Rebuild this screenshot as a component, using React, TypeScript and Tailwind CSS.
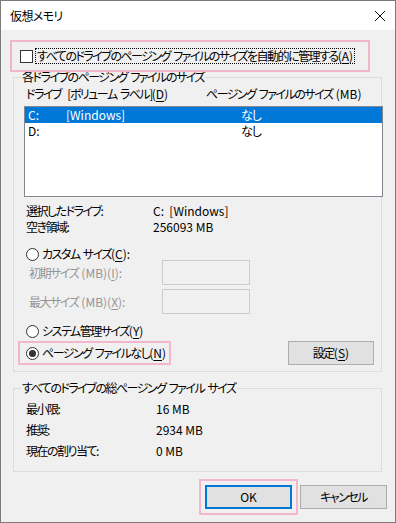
import React from "react";

const U = ({ children }: { children: React.ReactNode }) => (
  <span className="underline underline-offset-2">{children}</span>
);

// latin-only strings keep normal spacing
const L = ({ children }: { children: React.ReactNode }) => (
  <span className="tracking-normal [word-spacing:0px]">{children}</span>
);

function Radio({ checked }: { checked?: boolean }) {
  return (
    <span className="flex h-[13px] w-[13px] shrink-0 items-center justify-center rounded-full border border-[#333] bg-white">
      {checked && <span className="h-[7px] w-[7px] rounded-full bg-[#333]" />}
    </span>
  );
}

function Group({
  label,
  className,
  children,
}: {
  label: string;
  className: string;
  children: React.ReactNode;
}) {
  return (
    <div className={`relative border border-[#dcdcdc] ${className}`}>
      <span className="absolute -top-[9px] left-[7px] bg-[#f0f0f0] px-[1px] leading-[16px]">
        {label}
      </span>
      {children}
    </div>
  );
}

export default function App() {
  return (
    <div className="flex h-[523px] w-[396px] flex-col whitespace-nowrap border border-[#7a7a7a] bg-[#f0f0f0] font-['Noto_Sans_CJK_JP',sans-serif] text-[12px] leading-[16px] tracking-[-1.5px] text-black [font-feature-settings:'palt'] [word-spacing:2px]">
      {/* title bar */}
      <div className="flex h-[29px] items-center justify-between bg-white pl-[9px] pr-[8px]">
        <span className="tracking-[-0.6px]">仮想メモリ</span>
        <svg width="12" height="12" viewBox="0 0 12 12" className="mr-[1px]">
          <path d="M1 1 L11 11 M11 1 L1 11" stroke="#111" strokeWidth="1" />
        </svg>
      </div>

      {/* auto manage */}
      <div className="relative z-10 ml-[9px] mt-[10px] flex h-[32px] w-[360px] items-center border-2 border-[#f4b6cc] pl-[8px]">
        <span className="h-[13px] w-[13px] border border-[#333] bg-white" />
        <span className="ml-[2px] border border-dotted border-black px-[1px] leading-[14px]">
          すべてのドライブのページング ファイルのサイズを自動的に管理する
          <L>
            (<U>A</U>)
          </L>
        </span>
      </div>

      {/* per-drive group */}
      <Group
        label="各ドライブのページング ファイルのサイズ"
        className="ml-[12px] mt-[5px] h-[295px] w-[369px] pl-[10px] pr-[7px]"
      >
        <div className="mt-[8px] flex pl-[2px]">
          <span className="w-[180px]">
            ドライブ&nbsp;&nbsp;[ボリューム ラベル]
            <L>
              (<U>D</U>)
            </L>
          </span>
          <span>
            ページング ファイルのサイズ <L>(MB)</L>
          </span>
        </div>

        <div className="mt-[4px] mr-[-9px] h-[91px] border border-[#828790] bg-white tracking-normal">
          <div className="flex h-[16px] items-center bg-[#0078d7] pl-[3px] text-white">
            <span className="w-[38px]">C:</span>
            <span className="w-[175px]">[Windows]</span>
            <span className="tracking-[-1px]">なし</span>
          </div>
          <div className="flex h-[16px] items-center pl-[3px]">
            <span className="w-[213px]">D:</span>
            <span className="tracking-[-1px]">なし</span>
          </div>
        </div>

        <div className="mt-[6px] pl-[2px]">
          <div className="flex">
            <span className="w-[127px]">選択したドライブ:</span>
            <L>C:&nbsp;&nbsp;[Windows]</L>
          </div>
          <div className="flex">
            <span className="w-[127px]">空き領域:</span>
            <L>256093 MB</L>
          </div>
        </div>

        <div className="mt-[13px] flex h-[12px] items-center pl-[2px]">
          <Radio />
          <span className="ml-[3px]">
            カスタム サイズ
            <L>
              (<U>C</U>):
            </L>
          </span>
        </div>

        <div className="flex h-[25px] items-center pl-[5px] text-[#959595]">
          <span className="w-[133px]">
            初期サイズ{" "}
            <L>
              (MB)(<U>I</U>):
            </L>
          </span>
          <span className="h-[25px] w-[88px] border border-[#cccccc] bg-[#f0f0f0]" />
        </div>
        <div className="mt-[4px] flex h-[25px] items-center pl-[5px] text-[#959595]">
          <span className="w-[133px]">
            最大サイズ{" "}
            <L>
              (MB)(<U>X</U>):
            </L>
          </span>
          <span className="h-[25px] w-[88px] border border-[#cccccc] bg-[#f0f0f0]" />
        </div>

        <div className="mt-[11px] flex h-[12px] items-center pl-[2px]">
          <Radio />
          <span className="ml-[3px]">
            システム管理サイズ
            <L>
              (<U>Y</U>)
            </L>
          </span>
        </div>

        <div className="mt-[4px] flex items-center justify-between">
          <div className="ml-[-6px] flex h-[24px] w-[153px] items-center border-2 border-[#f4b6cc] pl-[6px]">
            <Radio checked />
            <span className="ml-[3px]">
              ページング ファイルなし
              <L>
                (<U>N</U>)
              </L>
            </span>
          </div>
          <button className="flex h-[24px] w-[86px] items-center justify-center border border-[#adadad] bg-[#e1e1e1]">
            設定
            <L>
              (<U>S</U>)
            </L>
          </button>
        </div>
      </Group>

      {/* totals group */}
      <Group
        label="すべてのドライブの総ページング ファイル サイズ"
        className="ml-[12px] mt-[16px] h-[84px] w-[369px] pl-[12px] pt-[9px]"
      >
        {[
          ["最小限", "16 MB"],
          ["推奨", "2934 MB"],
          ["現在の割り当て", "0 MB"],
        ].map(([k, v]) => (
          <div key={k} className="flex h-[21px] items-center">
            <span className="w-[130px]">
              {k}
              <L>:</L>
            </span>
            <L>{v}</L>
          </div>
        ))}
      </Group>

      {/* buttons */}
      <div className="mt-[7px] flex items-center justify-end pr-[8px]">
        <div className="flex h-[36px] w-[99px] items-center justify-center border-2 border-[#f4b6cc]">
          <button className="flex h-[24px] w-[87px] items-center justify-center border-2 border-[#0078d7] bg-[#e1e1e1] tracking-normal">
            OK
          </button>
        </div>
        <button className="ml-[2px] flex h-[24px] w-[87px] items-center justify-center border border-[#adadad] bg-[#e1e1e1]">
          キャンセル
        </button>
      </div>
    </div>
  );
}
